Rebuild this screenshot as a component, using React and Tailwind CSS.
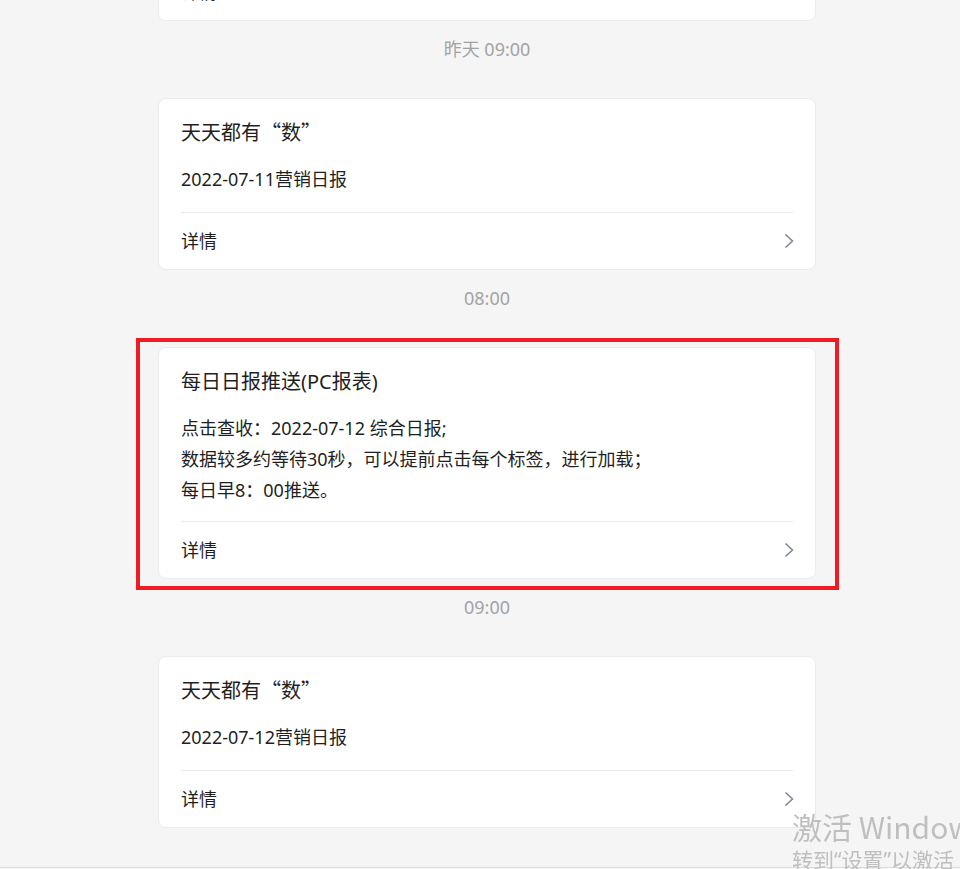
const messages = [
  { id: 'm1', title: ['天天都有', '数'], lines: ['2022-07-10营销日报'] },
  { id: 'm2', time: '昨天 09:00', title: ['天天都有', '数'], lines: ['2022-07-11营销日报'] },
  {
    id: 'm3',
    time: '08:00',
    title: '每日日报推送(PC报表)',
    marked: true,
    lines: ['点击查收：2022-07-12 综合日报;', '数据较多约等待30秒，可以提前点击每个标签，进行加载；', '每日早8：00推送。'],
  },
  { id: 'm4', time: '09:00', title: ['天天都有', '数'], lines: ['2022-07-12营销日报'] },
]

export default function App() {
  return (
    <div className="relative min-h-[869px] overflow-hidden bg-[#f5f5f5] font-['Noto_Sans','Noto_Sans_CJK_SC',sans-serif] text-[#1f1f1f]">
      <div className="ml-[158px] w-[658px] -mt-[151px]">
        {messages.map((msg) => (
          <div key={msg.id}>
            {msg.time ? <TimeLabel text={msg.time} /> : null}
            {msg.marked ? (
              <div className="relative">
                <MessageCard msg={msg} />
                <div className="pointer-events-none absolute -left-[22px] -top-[9px] -right-[23px] -bottom-[11px] border-4 border-[#ee1c25]" />
              </div>
            ) : (
              <MessageCard msg={msg} />
            )}
          </div>
        ))}
        <div className="h-[39px]" />
      </div>
      <div className="h-px bg-[#dadada]" />
      <div className="h-[2px] bg-[#fafafa]" />
      <Watermark />
    </div>
  )
}

function TimeLabel({ text }) {
  return <div className="mt-[18px] mb-[39px] h-[20px] text-center text-[18px] leading-[20px] text-[#a3a3a3]">{text}</div>
}

function Title({ title }) {
  if (typeof title === 'string') return title
  // quoted titles: the curly quotes come from the CJK face so they take a full cell
  return (
    <>
      {title[0]}
      <span className="font-['Noto_Sans_CJK_SC',sans-serif] leading-none">“</span>
      {title[1]}
      <span className="font-['Noto_Sans_CJK_SC',sans-serif] leading-none">”</span>
    </>
  )
}

function MessageCard({ msg }) {
  const multi = msg.lines.length > 1
  return (
    <div className="bg-white border border-[#ececec] rounded-lg">
      <div className={`px-[22px] pt-[19px] ${multi ? 'pb-[15px]' : 'pb-[17px]'}`}>
        <h3 className="h-[30px] text-[20px] leading-[30px] font-normal whitespace-nowrap">
          <Title title={msg.title} />
        </h3>
        <div className="mt-4 text-[18px] leading-[31px]">
          {msg.lines.map((line) => (
            <p key={line}>{line}</p>
          ))}
        </div>
      </div>
      <div className="mx-[22px] h-px bg-[#ebebeb]" />
      <div className="h-[56px] px-[22px] flex items-center justify-between text-[18px]">
        <span>详情</span>
        <svg width="10" height="16" viewBox="0 0 10 16" className="mr-[-1px]">
          <path d="M1.5 1.5 L8.5 8 L1.5 14.5" fill="none" stroke="#7b8594" strokeWidth="1.5" />
        </svg>
      </div>
    </div>
  )
}

function Watermark() {
  return (
    <div className="pointer-events-none fixed left-[792px] right-0 top-[806px] bottom-0 overflow-hidden whitespace-nowrap text-[#bfbfbf]">
      <div className="font-['Noto_Sans_CJK_SC',sans-serif] text-[30px] leading-[40px]">激活 Windows</div>
      <div className="text-[21px] leading-[28px]">转到“设置”以激活 Windows。</div>
    </div>
  )
}
